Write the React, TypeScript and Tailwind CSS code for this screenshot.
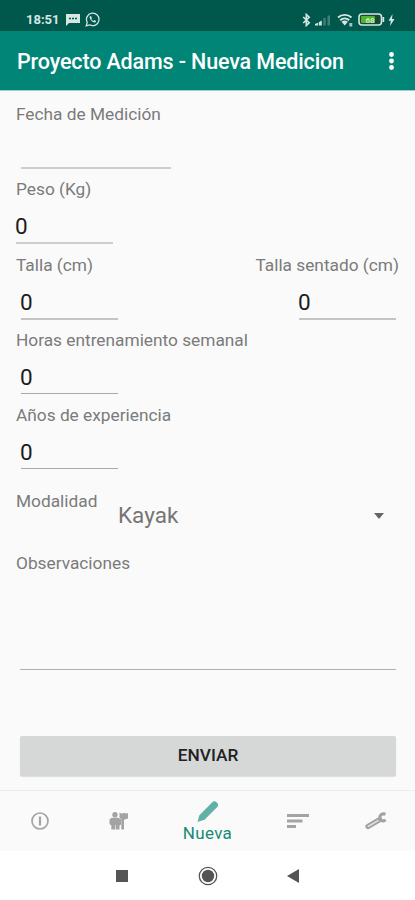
import type { ReactNode } from 'react';
import clsx from 'clsx';

function Label({ children }: { children: ReactNode }) {
  return <div className="h-6 whitespace-nowrap text-[17.3px] leading-6 text-[#7b7b7b]">{children}</div>;
}

function Field({ label, value, className }: { label: string; value?: string; className?: string }) {
  return (
    <div className="h-[75.3px]">
      <Label>{label}</Label>
      <div className={clsx('mt-3 text-[22.5px] leading-[26px] text-[#1c1c1c]', className)}>
        <span className="-ml-px">{value}</span>
      </div>
    </div>
  );
}

function StatusBar() {
  return (
    <div className="flex h-[31px] items-center bg-[#00574b] pt-2 pr-[20px] pl-[26px] text-[#d5e6e3]">
      <span className="w-[33px] text-[13px] font-bold leading-4">18:51</span>
      <svg className="ml-[7px]" width="14" height="13" viewBox="0 0 14 13">
        <path d="M0 1h14v9H3l-3 3z" fill="currentColor" />
        <path d="M3 5.500h2M6 5.500h2M9 5.500h2" stroke="#00574b" strokeWidth="1.400" />
      </svg>
      <svg className="ml-[5px]" width="15" height="15" viewBox="0 0 24 24">
        <path d="M2 22l1.600-5.400A10 10 0 1 1 7.400 20.500z" fill="none" stroke="currentColor" strokeWidth="2" />
        <path
          d="M8.500 6.500c-1.500.8-1.700 3 .5 6s4.800 4.500 6.700 4.200c1.700-.3 2-1.500 1.800-2.500l-2.700-1.300-1.300 1.400c-1.500-.5-2.700-1.700-3.400-3.100l1-1.300L9.800 6.800z"
          fill="currentColor"
        />
      </svg>

      <div className="ml-auto flex items-center">
        <svg width="9" height="14" viewBox="0 0 9 14">
          <path d="M1.200 4l6 5.700L4.300 12.500v-11L7.200 4.300l-6 5.700" fill="none" stroke="currentColor" strokeWidth="1.600" />
        </svg>
        <svg className="ml-[4px]" width="16" height="12" viewBox="0 0 16 12">
          <path d="M0 11.500V10l3-1.200v2.700zM3.800 11.500V8.300l3-1.800v5z" fill="currentColor" />
          <path d="M8.300 4h2.400v7.500H8.300zM12.500 1.500H15v10h-2.500z" fill="#3f8177" />
        </svg>
        <svg className="ml-[6px]" width="17" height="14" viewBox="0 0 17 14">
          <path d="M1 4.500a10 10 0 0 1 13.500 0M3.200 7.200a7 7 0 0 1 9 0" fill="none" stroke="currentColor" strokeWidth="1.900" />
          <path d="M4.500 8.800a5 5 0 0 1 6.400 0L7.700 12.500z" fill="currentColor" />
          <path d="M12.300 10h3v3.500h-3z" fill="#9fc5be" />
        </svg>
        <svg className="ml-[4px]" width="27" height="13" viewBox="0 0 27 13">
          <rect x="1" y="1" width="22.500" height="11" rx="3" fill="#16483a" stroke="#d5e6e3" strokeWidth="1.600" />
          <rect x="3" y="3" width="14" height="7" rx="1" fill="#4fb52f" />
          <path d="M24.500 4h1.700v5h-1.700z" fill="#d5e6e3" />
          <text x="12" y="9.500" textAnchor="middle" fontSize="8" fontWeight="700" fill="#d0ecc0">
            68
          </text>
        </svg>
        <svg className="ml-[3px]" width="7" height="12" viewBox="0 0 7 12">
          <path d="M4.500 0L.5 6.700h2.300L2 12l4.500-7H4z" fill="currentColor" />
        </svg>
      </div>
    </div>
  );
}

function BottomNav() {
  return (
    <div className="grid h-[61px] grid-cols-[79px_78px_101px_79px_78px] border-t border-[#ededed] bg-[#fafafa] text-[#a3a3a3]">
      <div className="flex items-center justify-center">
        <svg width="18" height="18" viewBox="0 0 18 18" fill="none" stroke="currentColor">
          <circle cx="9" cy="9" r="8" strokeWidth="1.700" />
          <path d="M9 4.500v9" strokeWidth="2.200" />
        </svg>
      </div>
      <div className="flex items-center justify-center">
        <svg width="19" height="20" viewBox="0 0 19 20" fill="currentColor">
          <circle cx="6" cy="3.700" r="2.700" />
          <path d="M2.500 6.800h7l2.500 1.700v5l-1.500 1v4H7V14h-.6v4.500H2.300v-4L.5 13V8.500z" />
          <path d="M10.500 1.500l2.500 1.200 1.500-1 1.500.5h3v5.300l-4 1.200V18.500h-2.700V8.500l-1.800-2z" />
        </svg>
      </div>
      <div className="flex flex-col items-center pt-[10px] text-[#168b74]">
        <svg width="22" height="22" viewBox="0 0 22 22" fill="#61b1a7">
          <path d="M.5 21l1.700-6.500L15 1.600a3.200 3.200 0 0 1 5 4.700L7.500 18.700z" />
        </svg>
        <span className="text-[17px] leading-5 tracking-[0.3px]">Nueva</span>
      </div>
      <div className="flex items-center justify-center">
        <svg width="22" height="16" viewBox="0 0 22 16" stroke="currentColor" strokeWidth="3">
          <path d="M0 2.500h22M0 8h15.500M0 13.500h9" />
        </svg>
      </div>
      <div className="flex items-center justify-center pb-px">
        <svg width="24" height="18" viewBox="0 0 24 18" fill="none" stroke="currentColor" strokeLinecap="round">
          <path d="M4 14.500L15 8" strokeWidth="5.400" />
          <path d="M4.300 14.300L14 8.600" stroke="#e4e4e4" strokeWidth="1.500" />
          <path d="M21.500 2.300c-3-1.200-6.200.5-5.500 3.700.6 2.800 3.400 3.600 5.700 2" strokeWidth="3.200" strokeLinecap="butt" />
        </svg>
      </div>
    </div>
  );
}

function SystemNav() {
  return (
    <div className="flex h-[49px] items-center bg-white pl-[116px] text-[#555]">
      <div className="h-3 w-3 bg-[#555]" />
      <svg className="ml-[70px]" width="20" height="20" viewBox="0 0 20 20">
        <circle cx="10" cy="10" r="8.700" fill="none" stroke="currentColor" strokeWidth="1.300" />
        <circle cx="10" cy="10" r="6.200" fill="currentColor" />
      </svg>
      <svg className="ml-[69px]" width="12" height="14" viewBox="0 0 12 14">
        <path d="M12 0v14L0 7z" fill="currentColor" />
      </svg>
    </div>
  );
}

export default function App() {
  return (
    <div className="flex h-[900px] w-[415px] flex-col overflow-hidden bg-[#fafafa] font-[Roboto,sans-serif]">
      <StatusBar />
      <header className="flex h-[59px] items-center justify-between bg-[#008577] pr-[21px] pl-[17px] text-white">
        <h1 className="pt-[3px] text-[21.5px] font-medium tracking-[-0.14px] whitespace-nowrap">
          Proyecto Adams - Nueva Medicion
        </h1>
        <svg width="5" height="18" viewBox="0 0 5 18" fill="currentColor">
          <circle cx="2.500" cy="2.500" r="2.400" />
          <circle cx="2.500" cy="9" r="2.400" />
          <circle cx="2.500" cy="15.500" r="2.400" />
        </svg>
      </header>

      <main className="flex-1 border-t border-[#9fcfc9] px-4 pt-[11px]">
        <Field label="Fecha de Medición" className="ml-[5px] h-[31px] w-[150px] border-b-2 border-[#cdcdcd]" />
        <Field label="Peso (Kg)" value="0" className="h-[31px] w-[97px] border-b-2 border-[#cdcdcd]" />
        <div className="flex justify-between">
          <Field label="Talla (cm)" value="0" className="ml-[5px] h-[31px] w-[97px] border-b-2 border-[#c4c4c4]" />
          <Field
            label="Talla sentado (cm)"
            value="0"
            className="mr-[3px] ml-auto h-[31px] w-[97px] border-b-2 border-[#c4c4c4]"
          />
        </div>
        <Field
          label="Horas entrenamiento semanal"
          value="0"
          className="ml-[5px] h-[30px] w-[97px] border-b border-[#a8a8a8]"
        />
        <Field label="Años de experiencia" value="0" className="ml-[5px] h-[30px] w-[97px] border-b border-[#a8a8a8]" />

        <div className="flex h-[73px] pt-[10.5px]">
          <div className="w-[102px]">
            <Label>Modalidad</Label>
          </div>
          <div className="flex h-[54px] flex-1 items-center justify-between pr-[15px] text-[22.5px] text-[#757575]">
            <span>Kayak</span>
            <svg width="10" height="6" viewBox="0 0 10 6">
              <path d="M0 0h10L5 6z" fill="#666" />
            </svg>
          </div>
        </div>

        <Label>Observaciones</Label>
        <div className="mr-[3px] ml-1 h-[94.500px] border-b border-[#b0b0b0]" />
        <button className="mt-[66px] mr-[3px] ml-1 block h-10 w-[376px] rounded-[2px] bg-[#d6d8d7] text-[17.3px] font-medium text-[#222] shadow-[0_1px_1px_#ddd]">
          ENVIAR
        </button>
      </main>

      <BottomNav />
      <SystemNav />
    </div>
  );
}
